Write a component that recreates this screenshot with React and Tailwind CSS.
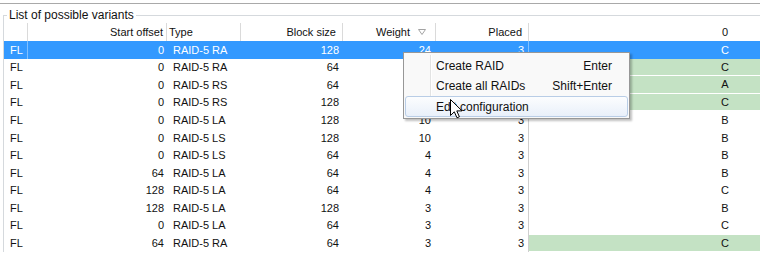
import React from "react";

const rows = [
  { start: 0, type: "RAID-5 RA", block: 128, weight: 24, placed: 3, v: "C", sel: true },
  { start: 0, type: "RAID-5 RA", block: 64, weight: "", placed: "", v: "C", green: true },
  { start: 0, type: "RAID-5 RS", block: 64, weight: "", placed: "", v: "A", green: true },
  { start: 0, type: "RAID-5 RS", block: 128, weight: "", placed: "", v: "C", green: true },
  { start: 0, type: "RAID-5 LA", block: 128, weight: 10, placed: 3, v: "B" },
  { start: 0, type: "RAID-5 LS", block: 128, weight: 10, placed: 3, v: "B" },
  { start: 0, type: "RAID-5 LS", block: 64, weight: 4, placed: 3, v: "B" },
  { start: 64, type: "RAID-5 LA", block: 64, weight: 4, placed: 3, v: "B" },
  { start: 128, type: "RAID-5 LA", block: 64, weight: 4, placed: 3, v: "C" },
  { start: 128, type: "RAID-5 LA", block: 128, weight: 3, placed: 3, v: "B" },
  { start: 0, type: "RAID-5 LA", block: 64, weight: 3, placed: 3, v: "C" },
  { start: 64, type: "RAID-5 RA", block: 64, weight: 3, placed: 3, v: "C", green: true },
];

function SortArrow() {
  return (
    <svg width="8" height="6" viewBox="0 0 8 6" className="ml-[8px] mb-[1px]">
      <path d="M0.5 0.5 H7.5 L4 5.5 Z" fill="white" stroke="#a3a3a3" strokeWidth="1" />
    </svg>
  );
}

function Cursor() {
  return (
    <svg width="13" height="20" viewBox="0 0 13 20" className="absolute left-[450px] top-[99px]">
      <path
        d="M0.5 0.5 L0.5 16.5 L4.3 12.8 L7 18.8 L9.4 17.8 L6.8 11.9 L12 11.9 Z"
        fill="white"
        stroke="black"
        strokeWidth="1"
        strokeLinejoin="miter"
      />
    </svg>
  );
}

function Row({ r }) {
  const txt = r.sel ? "text-white" : "text-[#111]";
  return (
    <div className={`flex h-[17.6px] ${r.sel ? "bg-[#3399ff]" : ""} ${txt}`}>
      <div className={`w-[24px] pl-[6px] flex items-center ${r.sel ? "border-r border-[#80c0ff]" : "pr-px"}`}>FL</div>
      <div className="w-[139px] pr-[3px] flex items-center justify-end">{r.start}</div>
      <div className="w-[74px] pl-[6px] flex items-center">{r.type}</div>
      <div className="w-[102px] pr-[4px] flex items-center justify-end">{r.block}</div>
      <div className="w-[93px] pr-[5px] flex items-center justify-end">{r.weight}</div>
      <div className={`w-[93px] pr-[4px] flex items-center justify-end border-r ${r.sel ? "border-[#80c0ff]" : "border-[#cfcfcf]"}`}>{r.placed}</div>
      <div
        className={`w-[392px] flex items-center justify-center ${r.green ? "bg-[#c4e2c4] border-b border-white" : ""}`}
      >
        {r.v}
      </div>
    </div>
  );
}

export default function App() {
  return (
    <div className="relative w-[760px] h-[260px] overflow-hidden bg-white text-[11px] font-['Liberation_Sans',Arial,sans-serif]">
      <div className="h-[3px] bg-white" />
      <div className="h-px bg-[#a9a9a9]" />

      <fieldset className="mt-[5px] ml-[3px] w-[800px] border-l border-t border-[#d5d9dd]">
        <legend className="ml-[3px] px-[2px] text-[12px] leading-[13px] text-[#111]">
          List of possible variants
        </legend>

        <div className="mt-[1px] flex h-[18px] text-[#111]">
          <div className="w-[24px] border-r border-[#dadada]" />
          <div className="w-[139px] pr-[3px] flex items-center justify-end border-r border-[#dadada]">Start offset</div>
          <div className="w-[74px] pl-[2px] flex items-center border-r border-[#dadada]">Type</div>
          <div className="w-[102px] pr-[6px] flex items-center justify-end border-r border-[#dadada]">Block size</div>
          <div className="w-[93px] pr-[9px] flex items-center justify-end border-r border-[#dadada]">
            Weight
            <SortArrow />
          </div>
          <div className="w-[93px] pr-[6px] flex items-center justify-end border-r border-[#dadada]">Placed</div>
          <div className="w-[392px] flex items-center justify-center">0</div>
        </div>

        <div>
          {rows.map((r, i) => (
            <Row key={i} r={r} />
          ))}
        </div>
      </fieldset>

      {/* context menu */}
      <div className="absolute left-[403px] top-[52px] w-[227px] h-[67px] border border-[#979797] bg-[#f9f9f9] shadow-[2px_2px_2px_rgba(0,0,0,0.25)] px-[1px] pt-[3px] text-[12px] text-[#111]">
        <div className="absolute left-[26px] top-[2px] bottom-[2px] w-[2px] border-l border-[#e2e3e3] border-r border-r-white" />
        <div className="relative flex h-[20px] items-center justify-between pl-[31px] pr-[16px]">
          <span>Create RAID</span>
          <span>Enter</span>
        </div>
        <div className="relative flex h-[20px] items-center justify-between pl-[31px] pr-[16px]">
          <span>Create all RAIDs</span>
          <span>Shift+Enter</span>
        </div>
        <div className="relative flex h-[21px] items-center justify-between pl-[30px] pr-[15px] rounded-[3px] border border-[#b9cde6] bg-gradient-to-b from-[#fcfdfe] to-[#e9f0fa]">
          <span>Edit configuration</span>
        </div>
      </div>

      <Cursor />
    </div>
  );
}
